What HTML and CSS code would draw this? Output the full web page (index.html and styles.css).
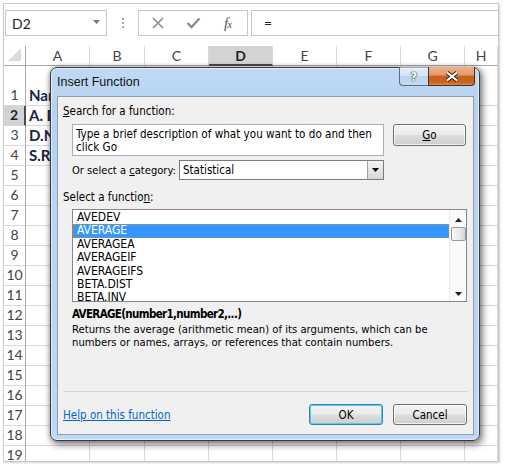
FILE: index.html
```html
<!DOCTYPE html>
<html>
<head>
<meta charset="utf-8">
<title>Insert Function</title>
<link rel="stylesheet" href="styles.css">
</head>
<body>
<div class="screen">
  <div class="fbar">
    <div class="namebox"><span>D2</span><svg class="nb-arrow" width="7" height="4" viewBox="0 0 7 4"><polygon points="0,0 7,0 3.5,4" fill="#777"/></svg></div>
    <div class="grip"><i></i><i></i><i></i></div>
    <div class="fbtns">
      <svg width="12" height="12" viewBox="0 0 12 12"><path d="M1 1 L11 11 M11 1 L1 11" stroke="#8c8c8c" stroke-width="1.6" fill="none"/></svg>
      <svg width="15" height="12" viewBox="0 0 15 12"><path d="M1.5 6 L5.5 10 L13.5 1.5" stroke="#8c8c8c" stroke-width="2.4" fill="none"/></svg>
      <span class="fx">f<span class="fxx">x</span></span>
    </div>
    <div class="finput">=</div>
  </div>
  <div class="sheet">
    <div class="hdr corner"><svg width="13" height="13" viewBox="0 0 13 13"><polygon points="13,0 13,13 0,13" fill="#dadada"/></svg></div>
    <div class="hdr col">A</div>
    <div class="hdr col">B</div>
    <div class="hdr col">C</div>
    <div class="hdr col sel">D</div>
    <div class="hdr col">E</div>
    <div class="hdr col">F</div>
    <div class="hdr col">G</div>
    <div class="hdr col">H</div>

    <div class="rh tall">1</div><div class="c tall">Name</div><div class="c tall"></div><div class="c tall"></div><div class="c tall"></div><div class="c tall"></div><div class="c tall"></div><div class="c tall"></div><div class="c tall"></div>
    <div class="rh rsel">2</div><div class="c">A. Davis</div><div class="c"></div><div class="c"></div><div class="c"></div><div class="c"></div><div class="c"></div><div class="c"></div><div class="c"></div>
    <div class="rh">3</div><div class="c">D.Nash</div><div class="c"></div><div class="c"></div><div class="c"></div><div class="c"></div><div class="c"></div><div class="c"></div><div class="c"></div>
    <div class="rh">4</div><div class="c">S.Ray</div><div class="c"></div><div class="c"></div><div class="c"></div><div class="c"></div><div class="c"></div><div class="c"></div><div class="c"></div>
    <div class="rh">5</div><div class="c"></div><div class="c"></div><div class="c"></div><div class="c"></div><div class="c"></div><div class="c"></div><div class="c"></div><div class="c"></div>
    <div class="rh">6</div><div class="c"></div><div class="c"></div><div class="c"></div><div class="c"></div><div class="c"></div><div class="c"></div><div class="c"></div><div class="c"></div>
    <div class="rh">7</div><div class="c"></div><div class="c"></div><div class="c"></div><div class="c"></div><div class="c"></div><div class="c"></div><div class="c"></div><div class="c"></div>
    <div class="rh">8</div><div class="c"></div><div class="c"></div><div class="c"></div><div class="c"></div><div class="c"></div><div class="c"></div><div class="c"></div><div class="c"></div>
    <div class="rh">9</div><div class="c"></div><div class="c"></div><div class="c"></div><div class="c"></div><div class="c"></div><div class="c"></div><div class="c"></div><div class="c"></div>
    <div class="rh">10</div><div class="c"></div><div class="c"></div><div class="c"></div><div class="c"></div><div class="c"></div><div class="c"></div><div class="c"></div><div class="c"></div>
    <div class="rh">11</div><div class="c"></div><div class="c"></div><div class="c"></div><div class="c"></div><div class="c"></div><div class="c"></div><div class="c"></div><div class="c"></div>
    <div class="rh">12</div><div class="c"></div><div class="c"></div><div class="c"></div><div class="c"></div><div class="c"></div><div class="c"></div><div class="c"></div><div class="c"></div>
    <div class="rh">13</div><div class="c"></div><div class="c"></div><div class="c"></div><div class="c"></div><div class="c"></div><div class="c"></div><div class="c"></div><div class="c"></div>
    <div class="rh">14</div><div class="c"></div><div class="c"></div><div class="c"></div><div class="c"></div><div class="c"></div><div class="c"></div><div class="c"></div><div class="c"></div>
    <div class="rh">15</div><div class="c"></div><div class="c"></div><div class="c"></div><div class="c"></div><div class="c"></div><div class="c"></div><div class="c"></div><div class="c"></div>
    <div class="rh">16</div><div class="c"></div><div class="c"></div><div class="c"></div><div class="c"></div><div class="c"></div><div class="c"></div><div class="c"></div><div class="c"></div>
    <div class="rh">17</div><div class="c"></div><div class="c"></div><div class="c"></div><div class="c"></div><div class="c"></div><div class="c"></div><div class="c"></div><div class="c"></div>
    <div class="rh">18</div><div class="c"></div><div class="c"></div><div class="c"></div><div class="c"></div><div class="c"></div><div class="c"></div><div class="c"></div><div class="c"></div>
    <div class="rh">19</div><div class="c"></div><div class="c"></div><div class="c"></div><div class="c"></div><div class="c"></div><div class="c"></div><div class="c"></div><div class="c"></div>
  </div>
</div>

<div class="dialog">
  <div class="titlebar">
    <span class="title">Insert Function</span>
    <div class="capbtns">
      <div class="cap help">?</div>
      <div class="cap close"><svg width="16" height="11" viewBox="0 0 16 11"><path d="M3 1.5 L13 9.5 M13 1.5 L3 9.5" stroke="#3b2010" stroke-width="4" fill="none"/><path d="M3 1.5 L13 9.5 M13 1.5 L3 9.5" stroke="#fff" stroke-width="2.2" fill="none"/></svg></div>
    </div>
  </div>
  <div class="client">
    <div class="lbl l-search"><u>S</u>earch for a function:</div>
    <div class="search-row">
      <div class="textbox">Type a brief description of what you want to do and then click Go</div>
      <div class="btn go"><u>G</u>o</div>
    </div>
    <div class="cat-row">
      <span class="cat-lbl">Or select a <u>c</u>ategory:</span>
      <div class="combo"><span>Statistical</span><div class="combo-btn"><svg width="7" height="4" viewBox="0 0 7 4"><polygon points="0,0 7,0 3.5,4" fill="#000"/></svg></div></div>
    </div>
    <div class="lbl l-func">Select a functio<u>n</u>:</div>
    <div class="listbox">
      <div class="items">
        <div class="item">AVEDEV</div>
        <div class="item selected">AVERAGE</div>
        <div class="item">AVERAGEA</div>
        <div class="item">AVERAGEIF</div>
        <div class="item">AVERAGEIFS</div>
        <div class="item">BETA.DIST</div>
        <div class="item">BETA.INV</div>
      </div>
      <div class="vscroll">
        <svg class="arr" width="7" height="4" viewBox="0 0 7 4"><polygon points="3.5,0 7,4 0,4" fill="#222"/></svg>
        <div class="thumb"></div>
        <div class="track"></div>
        <svg class="arr" width="7" height="4" viewBox="0 0 7 4"><polygon points="0,0 7,0 3.5,4" fill="#222"/></svg>
      </div>
    </div>
    <div class="sig">AVERAGE(number1,number2,...)</div>
    <div class="desc">Returns the average (arithmetic mean) of its arguments, which can be<br>numbers or names, arrays, or references that contain numbers.</div>
    <div class="sep"></div>
    <div class="footer">
      <span class="link">Help on this function</span>
      <div class="btn ok">OK</div>
      <div class="btn cancel">Cancel</div>
    </div>
  </div>
</div>
</body>
</html>
```

FILE: styles.css
```css
html, body {
  margin: 0;
  padding: 0;
  background: #ffffff;
}
body {
  width: 505px;
  height: 464px;
  overflow: hidden;
  position: relative;
}
.screen {
  position: absolute;
  left: 3px;
  top: 3px;
  width: 496px;
  height: 459px;
  box-sizing: border-box;
  border: 1px solid #c9c9c9;
  box-shadow: 1px 1px 2px rgba(0,0,0,0.18);
  background: #fff;
  overflow: hidden;
  font-family: "Lato", "Liberation Sans", sans-serif;
}

/* formula bar */
.fbar {
  height: 42px;
  box-sizing: border-box;
  padding-top: 6px;
  display: flex;
  align-items: flex-start;
}
.namebox {
  margin-left: 1px;
  width: 102px;
  height: 26px;
  box-sizing: border-box;
  border: 1px solid #c6c6c6;
  display: flex;
  align-items: center;
  justify-content: space-between;
  padding: 0 6px 0 6px;
  font-size: 14px;
  color: #222;
}
.nb-arrow { margin-top: -3px; }
.grip {
  width: 31px;
  height: 26px;
  display: flex;
  flex-direction: column;
  align-items: center;
  justify-content: center;
  gap: 2px;
}
.grip i {
  display: block;
  width: 2px;
  height: 2px;
  background: #a8a8a8;
}
.fbtns {
  width: 110px;
  height: 26px;
  box-sizing: border-box;
  border: 1px solid #c6c6c6;
  display: flex;
  align-items: center;
  padding-left: 13px;
  gap: 22px;
}
.fx {
  font-family: "Liberation Serif", serif;
  font-style: italic;
  font-size: 15px;
  color: #555;
  margin-left: 1px;
  letter-spacing: -1px;
}
.fxx { font-size: 11px; }
.finput {
  margin-left: 3px;
  flex: 1;
  height: 26px;
  box-sizing: border-box;
  border: 1px solid #c6c6c6;
  border-right: none;
  padding-left: 12px;
  font-size: 14px;
  line-height: 24px;
  color: #222;
}

/* sheet */
.sheet {
  display: grid;
  grid-template-columns: 22px 64px 55px 64px 64px 64px 64px 64px 33px;
  grid-auto-rows: 20px;
  grid-template-rows: 20px 40px;
  font-size: 14px;
}
.hdr {
  box-sizing: border-box;
  border-right: 1px solid #d8d8d8;
  border-bottom: 1px solid #ababab;
  color: #444;
  display: flex;
  align-items: center;
  justify-content: center;
  font-size: 14px;
  background: #fff;
}
.hdr.corner {
  justify-content: flex-end;
  align-items: flex-end;
  padding: 0 4px 4px 0;
  border-right: 1px solid #ababab;
}
.hdr.sel {
  background: #d3d3d3;
  border-bottom: 2px solid #4a4a4a;
  color: #222;
  font-weight: bold;
}
.rh {
  box-sizing: border-box;
  border-right: 1px solid #ababab;
  border-bottom: 1px solid #d8d8d8;
  color: #444;
  font-size: 14px;
  display: flex;
  align-items: flex-end;
  justify-content: center;
  padding-bottom: 1px;
  line-height: 18px;
}
.rh.rsel {
  background: #d3d3d3;
  border-right: 2px solid #4a4a4a;
  color: #222;
  font-weight: bold;
}
.c {
  box-sizing: border-box;
  border-right: 1px solid #d8d8d8;
  border-bottom: 1px solid #d8d8d8;
  color: #17244a;
  font-size: 15px;
  font-weight: bold;
  display: flex;
  align-items: flex-end;
  padding: 0 0 1px 3px;
  line-height: 18px;
  white-space: nowrap;
  overflow: hidden;
}

/* dialog */
.dialog {
  position: absolute;
  left: 50px;
  top: 67px;
  width: 430px;
  height: 374px;
  box-sizing: border-box;
  border: 1px solid #3a3a3a;
  border-radius: 7px;
  background: linear-gradient(180deg, #c0daf4 0%, #b6d3f1 10%, #bcd8f5 100%);
  box-shadow: inset 0 0 0 1px rgba(255,255,255,0.55), 2px 3px 7px 1px rgba(0,0,0,0.45), 0 0 4px rgba(0,0,0,0.25);
  display: flex;
  flex-direction: column;
  font-family: "DejaVu Sans Condensed", "DejaVu Sans", sans-serif;
  font-stretch: condensed;
  font-size: 11.5px;
  color: #000;
}
.titlebar {
  height: 28px;
  flex: none;
  display: flex;
  align-items: flex-start;
  padding-left: 6px;
}
.title {
  font-family: "Liberation Sans", sans-serif;
  font-stretch: normal;
  font-size: 12.5px;
  color: #111;
  line-height: 28px;
}
.capbtns {
  margin-left: auto;
  margin-right: 4px;
  margin-top: -1px;
  display: flex;
  height: 19px;
}
.cap {
  box-sizing: border-box;
  height: 19px;
  display: flex;
  align-items: center;
  justify-content: center;
}
.cap.help {
  width: 29px;
  border: 1px solid #5f6e80;
  border-right: none;
  border-top: none;
  border-radius: 0 0 0 4px;
  background: linear-gradient(180deg, rgba(255,255,255,0.55) 0%, rgba(225,236,247,0.6) 50%, rgba(190,210,232,0.7) 52%, rgba(200,220,240,0.6) 100%);
  font-family: "DejaVu Sans", sans-serif;
  font-weight: bold;
  font-size: 13px;
  color: #fff;
  text-shadow: 0 0 1px #333, 0 0 1px #333, 0 0 1px #333;
}
.cap.close {
  width: 47px;
  border: 1px solid #5e2a12;
  border-top: none;
  border-radius: 0 0 4px 0;
  background: linear-gradient(180deg, #eab18c 0%, #e59a6c 45%, #c6621d 50%, #c46520 85%, #d98a4a 100%);
}
.client {
  flex: 1;
  margin: 0 5px 5px 6px;
  box-sizing: border-box;
  border: 1px solid #8e9cad;
  background: #f0f0f0;
  padding: 0 5px 0 5px;
  display: flex;
  flex-direction: column;
}
.lbl {
  line-height: 14px;
  white-space: nowrap;
}
.l-search { margin-top: 7px; }
.search-row {
  margin-top: 6px;
  margin-left: 9px;
  display: flex;
  align-items: flex-start;
  gap: 9px;
}
.textbox {
  width: 312px;
  height: 32px;
  box-sizing: border-box;
  border: 1px solid #abadb3;
  background: #fff;
  padding: 3px 3px 0 3px;
  line-height: 13px;
  font-size: 11.6px;
}
.btn {
  box-sizing: border-box;
  height: 22px;
  border: 1px solid #707070;
  border-radius: 3px;
  background: linear-gradient(180deg, #f2f2f2 0%, #ebebeb 48%, #dddddd 52%, #cfcfcf 100%);
  box-shadow: inset 0 0 0 1px rgba(255,255,255,0.7);
  display: flex;
  align-items: center;
  justify-content: center;
}
.btn.go { width: 73px; }
.cat-row {
  margin-top: 4px;
  margin-left: 9px;
  display: flex;
  align-items: center;
  height: 20px;
}
.cat-lbl {
  flex: none;
  width: 107px;
  white-space: nowrap;
  font-size: 11.1px;
}
.combo {
  width: 205px;
  height: 20px;
  box-sizing: border-box;
  border: 1px solid #7a7a7a;
  background: #fff;
  display: flex;
  align-items: center;
  justify-content: space-between;
  padding-left: 3px;
}
.combo-btn {
  width: 16px;
  height: 18px;
  box-sizing: border-box;
  border-left: 1px solid #a0a0a0;
  background: linear-gradient(180deg, #f4f4f4 0%, #e6e6e6 50%, #d6d6d6 100%);
  display: flex;
  align-items: center;
  justify-content: center;
}
.l-func { margin-top: 10px; }
.listbox {
  margin-top: 5px;
  margin-left: 9px;
  width: 395px;
  height: 93px;
  box-sizing: border-box;
  border: 1px solid #828790;
  background: #fff;
  display: flex;
}
.items {
  flex: 1;
  padding-top: 1px;
  font-size: 12px;
}
.item {
  height: 13.4px;
  line-height: 13.4px;
  padding-left: 4px;
  box-sizing: border-box;
  white-space: nowrap;
}
.item.selected {
  background: #3399ff;
  color: #fff;
  outline: 1px dotted #c8863a;
  outline-offset: -1px;
}
.vscroll {
  width: 17px;
  box-sizing: border-box;
  border-left: 1px dotted #dcdcdc;
  background: #fafafa;
  display: flex;
  flex-direction: column;
  align-items: center;
  padding: 8px 0 5px 0;
}
.thumb {
  margin-top: 5px;
  width: 15px;
  height: 14px;
  box-sizing: border-box;
  border: 1px solid #9a9a9a;
  border-radius: 2px;
  background: linear-gradient(90deg, #f7f7f7 0%, #e9e9e9 60%, #d4d4d4 100%);
}
.track { flex: 1; }
.sig {
  margin-top: 5px;
  margin-left: 9px;
  font-weight: bold;
  line-height: 14px;
  letter-spacing: -0.65px;
}
.desc {
  margin-top: 2px;
  margin-left: 9px;
  line-height: 13px;
  font-size: 11.2px;
}
.sep {
  margin-top: 42px;
  height: 1px;
  background: #d5d5d5;
}
.footer {
  margin-top: 12px;
  display: flex;
  align-items: center;
  padding-right: 1px;
}
.link {
  color: #0066cc;
  text-decoration: underline;
  margin-right: auto;
}
.btn.ok {
  width: 74px;
  height: 21px;
  border-color: #3c7fb1;
  box-shadow: inset 0 0 0 1px #48d0f6;
  margin-right: 10px;
}
.btn.cancel {
  width: 74px;
  height: 21px;
}
```
